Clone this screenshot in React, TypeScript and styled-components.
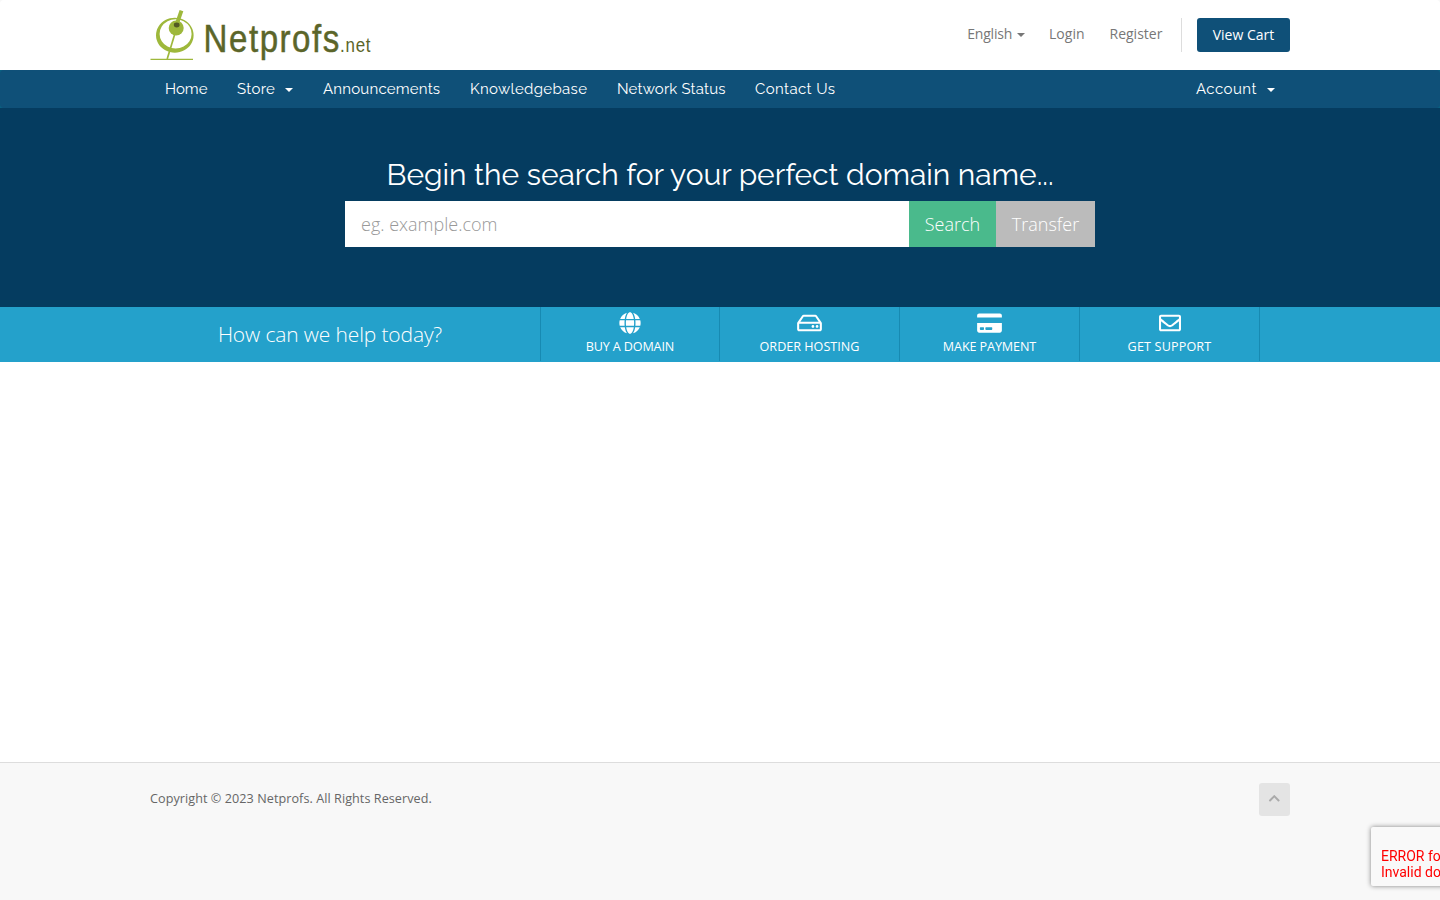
import React from "react";
import styled, { createGlobalStyle } from "styled-components";
import { FaGlobe, FaRegHdd, FaCreditCard, FaRegEnvelope, FaChevronUp } from "react-icons/fa";

const Global = createGlobalStyle`
  * { box-sizing: border-box; }
  html, body { margin: 0; padding: 0; height: 100%; }
  body { background: #f8f8f8; font-family: "Open Sans", Verdana, sans-serif; font-size: 14px; line-height: 20px; color: #333; overflow: hidden; }
  a { text-decoration: none; color: inherit; }
`;
const Container = styled.div`
  width: 1140px;
  margin: 0 auto;
  display: flex;
  justify-content: space-between;
`;
const Header = styled.header`
  background: #fff;
  height: 70px;
  border-radius: 4px 4px 0 0;
`;
const Logo = styled.svg`
  display: block;
  width: 222px;
  height: 70px;
  overflow: visible;
`;
const TopNav = styled.ul`
  list-style: none;
  margin: 18px 0 0;
  padding: 0;
  display: flex;
  height: 34px;
`;
const TopItem = styled.li<{ $width: number; $spacing?: number }>`
  width: ${(p) => p.$width}px;
  letter-spacing: ${(p) => p.$spacing ?? 0}px;
  color: #777;
  line-height: 32px;
  white-space: nowrap;
`;
const CartItem = styled.li`
  border-left: 1px solid #ddd;
  padding-left: 15px;
`;
const CartButton = styled.a`
  display: block;
  width: 93px;
  height: 34px;
  line-height: 33px;
  text-align: center;
  color: #fff;
  background: #0f5078;
  border-radius: 3px;
`;
const Caret = styled.span<{ $gap: number }>`
  display: inline-block;
  margin-left: ${(p) => p.$gap}px;
  vertical-align: middle;
  border-top: 4px solid;
  border-left: 4px solid transparent;
  border-right: 4px solid transparent;
`;
const MenuBackdrop = styled.div`
  background: #0a6080;
`;
const MainMenu = styled.nav`
  background: #0f5078;
  height: 38px;
  border-radius: 4px;
`;
const MenuGroup = styled.div`
  display: flex;
`;
const MenuItem = styled.a<{ $width: number; $spacing: number }>`
  width: ${(p) => p.$width}px;
  padding-left: 15px;
  font-family: Raleway, Lato, sans-serif;
  font-size: 15px;
  line-height: 38px;
  letter-spacing: ${(p) => p.$spacing}px;
  color: #fff;
  white-space: nowrap;
`;
const Banner = styled.section`
  background: #053c60;
  height: 199px;
  padding-top: 50px;
  display: flex;
  flex-direction: column;
  align-items: center;
`;
const BannerTitle = styled.h2`
  margin: 0 0 10px;
  font-family: Raleway, Lato, sans-serif;
  font-weight: 400;
  font-size: 30px;
  line-height: 33px;
  letter-spacing: -0.05px;
  color: #fff;
  white-space: nowrap;
`;
const SearchGroup = styled.div`
  display: flex;
  width: 750px;
  height: 46px;
`;
const DomainInput = styled.input`
  flex: 1;
  min-width: 0;
  border: 0;
  outline: 0;
  padding: 10px 16px;
  font: 300 18px "Open Sans", sans-serif;
  background: #fff;
  &::placeholder { color: #999; opacity: 1; }
`;
const SearchButton = styled.button<{ $width: number; $color: string }>`
  width: ${(p) => p.$width}px;
  border: 0;
  padding: 0;
  background: ${(p) => p.$color};
  color: #fff;
  font: 300 18px "Open Sans", sans-serif;
`;
const Shortcuts = styled.section`
  background: #24a1cb;
  height: 55px;
`;
const ShortcutRow = styled.div`
  width: 1140px;
  margin: 0 auto;
  display: flex;
  height: 54px;
`;
const Prompt = styled.p`
  margin: 0;
  width: 390px;
  padding-right: 30px;
  text-align: center;
  font-size: 21px;
  font-weight: 300;
  line-height: 55px;
  letter-spacing: -0.14px;
  color: #fff;
`;
const Shortcut = styled.a<{ $last?: boolean; $width: number; $icon: number; $spacing: number }>`
  width: ${(p) => p.$width}px;
  border-left: 1px solid #178ab2;
  border-right: ${(p) => (p.$last ? "1px solid #178ab2" : "0")};
  display: flex;
  flex-direction: column;
  align-items: center;
  padding-top: 5px;
  color: #fff;
  font-size: 12.6px;
  line-height: 25px;
  letter-spacing: ${(p) => p.$spacing}px;
  white-space: nowrap;
  svg { display: block; flex: none; height: 22px; width: ${(p) => p.$icon}px; }
`;
const Content = styled.main`
  background: #fff;
  height: 400px;
`;
const Footer = styled.footer`
  background: #f8f8f8;
  border-top: 1px solid #ddd;
  height: 138px;
  padding-top: 20px;
`;
const Copyright = styled.p`
  margin: 6px 0 0;
  font-size: 12.6px;
  letter-spacing: 0.07px;
  color: #666;
`;
const BackToTop = styled.a`
  width: 31px;
  height: 33px;
  border-radius: 3px;
  background: #e4e4e4;
  color: #aaa;
  display: flex;
  align-items: center;
  justify-content: center;
  padding-bottom: 3px;
`;
const CaptchaBadge = styled.aside`
  position: fixed;
  left: 1371px;
  top: 827px;
  width: 256px;
  height: 59px;
  padding: 21px 10px 0;
  border-radius: 2px;
  background: #f9f9f9;
  box-shadow: gray 0 0 5px;
  font: 14px/16px Roboto, sans-serif;
  color: #f00;
  white-space: nowrap;
`;

const menu = [
  { label: "Home", width: 72, spacing: 0 },
  { label: "Store", width: 86, spacing: 0.3, caret: true },
  { label: "Announcements", width: 147, spacing: 0.2 },
  { label: "Knowledgebase", width: 147, spacing: 0.33 },
  { label: "Network Status", width: 138, spacing: 0.17 },
  { label: "Contact Us", width: 111, spacing: 0.38 },
];

export default function App() {
  return (
    <>
      <Global />
      <Header>
        <Container>
          <Logo viewBox="0 0 222 70" role="img" aria-label="Netprofs.net">
            <path d="M29.6 10 L33.3 11.2 L28.5 25 L24.8 24 Z" fill="#9eb83b" />
            <path fillRule="evenodd" fill="#9eb83b" d="M24.8 17.7a18.8 17.5 0 1 0 .01 0ZM25.6 19.3a16 14.6 0 1 1-.01 0Z" />
            <circle cx="26.2" cy="28" r="7.5" fill="#9eb83b" />
            <ellipse cx="26.7" cy="25" rx="2.9" ry="2.4" fill="#535a24" />
            <path d="M24.8 34 L17.2 59" stroke="#9eb83b" strokeWidth="1.7" />
            <path d="M.5 59.4H43" stroke="#9eb83b" strokeWidth="1.3" />
            <g fontFamily="Liberation Sans, Arial, sans-serif" fill="#5b6529">
              <text transform="translate(53.6 51.7) scale(.87 1)" fontSize="38" stroke="#5b6529" strokeWidth=".5" textLength="156" lengthAdjust="spacing">Netprofs</text>
              <text transform="translate(190 52) scale(.85 1)" fontSize="20" textLength="36" lengthAdjust="spacing">.net</text>
            </g>
          </Logo>
          <TopNav>
            <TopItem $width={83} $spacing={-0.2}>&#8202;English<Caret $gap={4.5} /></TopItem>
            <TopItem $width={60.5} $spacing={0.05}>Login</TopItem>
            <TopItem $width={71.5}>Register</TopItem>
            <CartItem><CartButton href="#">View Cart</CartButton></CartItem>
          </TopNav>
        </Container>
      </Header>
      <MenuBackdrop>
        <MainMenu>
          <Container>
            <MenuGroup>
              {menu.map((m) => (
                <MenuItem key={m.label} href="#" $width={m.width} $spacing={m.spacing}>
                  {m.label}{m.caret && <Caret $gap={10} />}
                </MenuItem>
              ))}
            </MenuGroup>
            <MenuItem href="#" $width={109} $spacing={0.45}>Account<Caret $gap={10} /></MenuItem>
          </Container>
        </MainMenu>
      </MenuBackdrop>
      <Banner>
        <BannerTitle>Begin the search for your perfect domain name...</BannerTitle>
        <SearchGroup>
          <DomainInput placeholder="eg. example.com" />
          <SearchButton $width={87} $color="#4aba8c">Search</SearchButton>
          <SearchButton $width={99} $color="#bbb">Transfer</SearchButton>
        </SearchGroup>
      </Banner>
      <Shortcuts>
        <ShortcutRow>
          <Prompt>How can we help today?</Prompt>
          <Shortcut href="#" $width={179} $icon={22} $spacing={-0.15}><FaGlobe />BUY A DOMAIN</Shortcut>
          <Shortcut href="#" $width={180} $icon={25} $spacing={0}><FaRegHdd />ORDER HOSTING</Shortcut>
          <Shortcut href="#" $width={180} $icon={25} $spacing={-0.1}><FaCreditCard />MAKE PAYMENT</Shortcut>
          <Shortcut href="#" $width={181} $last $icon={22} $spacing={0.15}><FaRegEnvelope />GET SUPPORT</Shortcut>
        </ShortcutRow>
      </Shortcuts>
      <Content />
      <Footer>
        <Container>
          <Copyright>Copyright © 2023 Netprofs. All Rights Reserved.</Copyright>
          <BackToTop href="#"><FaChevronUp size={12.6} /></BackToTop>
        </Container>
      </Footer>
      <CaptchaBadge>ERROR for site owner:<br />Invalid domain for site key</CaptchaBadge>
    </>
  );
}
